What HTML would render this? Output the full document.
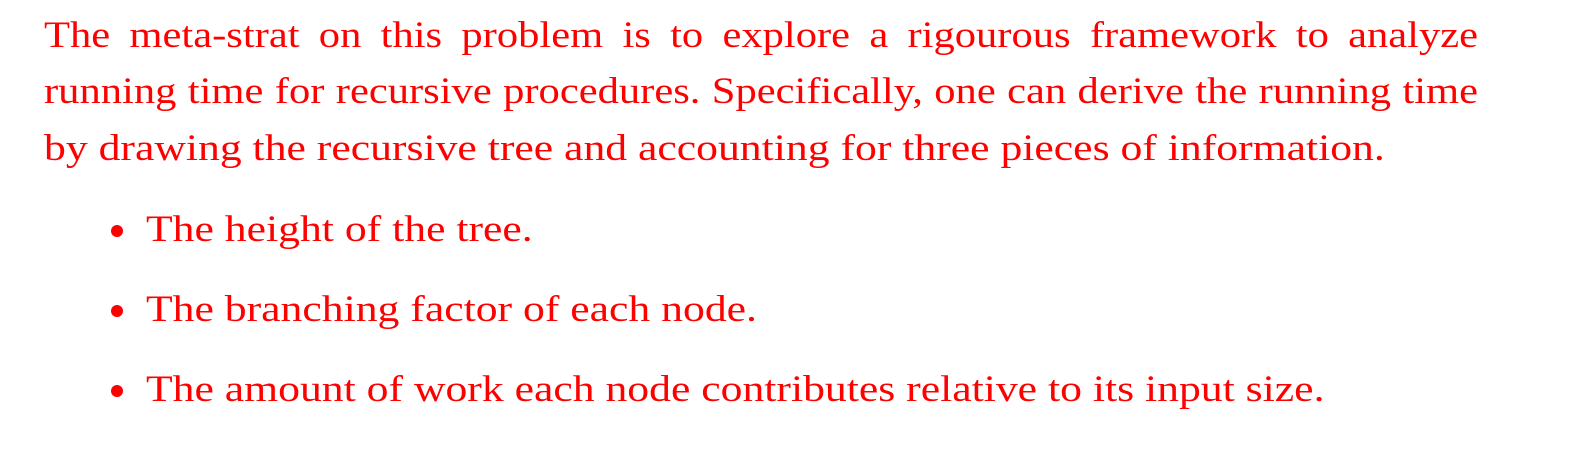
<!DOCTYPE html>
<html><head><meta charset="utf-8"><style>
html,body{margin:0;padding:0;background:#fff;width:1572px;height:454px;overflow:hidden}
body{font-family:"Liberation Serif",serif;color:#ff0000;font-size:37px;position:relative}
.l{position:absolute;left:44px;white-space:nowrap;line-height:1;transform-origin:0 0;transform:scaleX(1.18)}
.j{position:absolute;left:44px;width:1247px;line-height:1;text-align:justify;text-align-last:justify;transform-origin:0 0;transform:scaleX(1.15)}
.b{position:absolute;left:146px;white-space:nowrap;line-height:1;transform-origin:0 0;transform:scaleX(1.18)}
.d{position:absolute;left:111px;width:12px;height:12px;border-radius:50%;background:#ff0000}
</style></head><body>
<div class="j" style="top:17px">The meta-strat on this problem is to explore a rigourous framework to analyze</div>
<div class="j" style="top:73px">running time for recursive procedures. Specifically, one can derive the running time</div>
<div class="l" style="top:130px">by drawing the recursive tree and accounting for three pieces of information.</div>
<div class="d" style="top:225px"></div><div class="b" style="top:211px">The height of the tree.</div>
<div class="d" style="top:305px"></div><div class="b" style="top:291px">The branching factor of each node.</div>
<div class="d" style="top:385px"></div><div class="b" style="top:371px">The amount of work each node contributes relative to its input size.</div>
</body></html>
